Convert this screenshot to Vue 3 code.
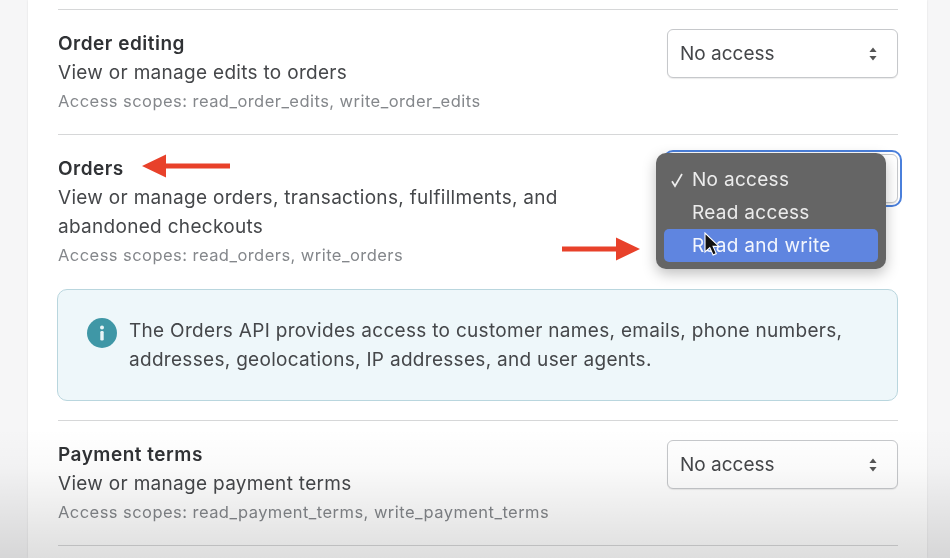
<script setup>
const rowsTop = {
  title: 'Order editing',
  desc: 'View or manage edits to orders',
  scopes: 'Access scopes: read_order_edits, write_order_edits'
}
const rowsBottom = {
  title: 'Payment terms',
  desc: 'View or manage payment terms',
  scopes: 'Access scopes: read_payment_terms, write_payment_terms'
}
</script>

<template>
  <div class="page">
    <main class="card">
      <section class="row">
        <div class="info">
          <h3>{{ rowsTop.title }}</h3>
          <p class="desc">{{ rowsTop.desc }}</p>
          <p class="scopes">{{ rowsTop.scopes }}</p>
        </div>
        <div class="select">
          <span>No access</span>
          <svg class="updown" width="10" height="16" viewBox="0 0 10 16"><path d="M5 1.5 8.6 6H1.4zM5 14.5 1.4 10h7.2z" fill="#555"/></svg>
        </div>
      </section>

      <section class="row orders">
        <div class="head">
          <div class="info">
            <h3>Orders</h3>
            <p class="desc narrow">View or manage orders, transactions, fulfillments, and abandoned checkouts</p>
            <p class="scopes">Access scopes: read_orders, write_orders</p>
          </div>
          <div class="select focused">
            <ul class="menu">
              <li>
                <svg class="check" width="14" height="16" viewBox="0 0 14 16"><path d="M2 9.2 5 14 12 2" fill="none" stroke="#ececec" stroke-width="1.7"/></svg>
                No access
              </li>
              <li>Read access</li>
              <li class="active">Read and write</li>
            </ul>
            <svg class="cursor" width="19" height="26" viewBox="0 0 19 26">
              <path d="M2 1v19l4.8-4.4 3.3 7.4 3.2-1.4-3.2-7.2H16z" fill="#111" stroke="#fff" stroke-width="1.1"/>
            </svg>
          </div>
        </div>
        <div class="banner">
          <svg class="info-icon" width="30" height="30" viewBox="0 0 30 30">
            <circle cx="15" cy="15" r="15" fill="#3f97a6"/>
            <circle cx="15" cy="9.4" r="2" fill="#e9f5f7"/>
            <rect x="13.3" y="13" width="3.4" height="9.4" rx="1.2" fill="#e9f5f7"/>
          </svg>
          <p>The Orders API provides access to customer names, emails, phone numbers, addresses, geolocations, IP addresses, and user agents.</p>
        </div>
      </section>

      <section class="row">
        <div class="info">
          <h3>{{ rowsBottom.title }}</h3>
          <p class="desc">{{ rowsBottom.desc }}</p>
          <p class="scopes">{{ rowsBottom.scopes }}</p>
        </div>
        <div class="select">
          <span>No access</span>
          <svg class="updown" width="10" height="16" viewBox="0 0 10 16"><path d="M5 1.5 8.6 6H1.4zM5 14.5 1.4 10h7.2z" fill="#555"/></svg>
        </div>
      </section>

      <section class="row last"></section>
    </main>

    <svg class="arrow arrow-left" width="90" height="26" viewBox="0 0 90 26">
      <path d="M1 13 25 1.5v9h64v5H25v9z" fill="#e8412a"/>
    </svg>
    <svg class="arrow arrow-right" width="80" height="26" viewBox="0 0 80 26">
      <path d="M79 13 55 1.500v9H1v5h54v9z" fill="#e8412a"/>
    </svg>
    <div class="shade"></div>
  </div>
</template>

<style scoped>
.page {
  position: relative;
  width: 950px;
  height: 558px;
  overflow: hidden;
  box-sizing: border-box;
  padding: 0 23px 0 28px;
  background: #f6f6f7;
  font-family: Inter, "Liberation Sans", sans-serif;
  color: #3a3c3f;
  filter: blur(0.5px);
}
.card {
  background: #fff;
  padding: 9px 29px 0 30px;
  height: 100%;
  box-sizing: border-box;
  box-shadow: 0 0 2px rgba(0, 0, 0, 0.1);
}
.row {
  display: flex;
  justify-content: space-between;
  align-items: flex-start;
  border-top: 1px solid #d6d7d8;
  padding: 19px 0;
}
.orders {
  display: block;
}
.last {
  padding: 0;
}
.head {
  display: flex;
  justify-content: space-between;
  align-items: flex-start;
}
h3 {
  margin: 0;
  font-size: 19px;
  line-height: 29px;
  font-weight: 600;
  letter-spacing: 0.5px;
  color: #303235;
}
.desc {
  margin: 0;
  font-size: 19px;
  line-height: 29px;
  letter-spacing: 0.3px;
  color: #45474a;
}
.narrow {
  width: 530px;
}
.scopes {
  margin: 0;
  font-size: 16.5px;
  line-height: 28px;
  letter-spacing: 0.45px;
  color: #84878b;
}
.select {
  position: relative;
  box-sizing: border-box;
  width: 231px;
  height: 49px;
  padding: 0 19px 0 12px;
  display: flex;
  align-items: center;
  justify-content: space-between;
  background: #fff;
  border: 1.5px solid #c6c8cb;
  border-radius: 6px;
  font-size: 19px;
  color: #45474a;
  box-shadow: 0 1px 1px rgba(0, 0, 0, 0.08);
}
.focused {
  outline: 2px solid #4a7fdb;
  outline-offset: 2px;
}
.menu {
  position: absolute;
  left: -12px;
  top: -2px;
  width: 230px;
  box-sizing: border-box;
  margin: 0;
  padding: 10px 8px 7px;
  list-style: none;
  background: #656565;
  border-radius: 10px;
  color: #ececec;
  font-size: 19px;
  letter-spacing: 0.3px;
  box-shadow: 0 5px 14px rgba(0, 0, 0, 0.25);
}
.menu li {
  position: relative;
  height: 33px;
  line-height: 33px;
  padding-left: 28px;
  border-radius: 5px;
}
.menu .active {
  background: #5f85e0;
  color: #f3f6fd;
}
.check {
  position: absolute;
  left: 6px;
  top: 9px;
}
.cursor {
  position: absolute;
  left: 35px;
  top: 77px;
}
.banner {
  display: flex;
  gap: 12px;
  box-sizing: border-box;
  height: 112px;
  margin: 20px 0 0 -1px;
  padding: 26px 20px 0 29px;
  background: #eef7fa;
  border: 1.5px solid #b9d6de;
  border-radius: 10px;
}
.info-icon {
  flex: none;
  margin-top: 2px;
}
.banner p {
  margin: 0;
  font-size: 19px;
  line-height: 29px;
  letter-spacing: 0.3px;
  color: #45474a;
}
.arrow {
  position: absolute;
}
.arrow-left {
  left: 141px;
  top: 153px;
}
.arrow-right {
  left: 561px;
  top: 236px;
}
.shade {
  position: absolute;
  left: 0;
  right: 0;
  bottom: 0;
  height: 130px;
  pointer-events: none;
  background: linear-gradient(to bottom, rgba(0, 0, 0, 0), rgba(0, 0, 0, 0.02) 30%, rgba(0, 0, 0, 0.13));
}
</style>
